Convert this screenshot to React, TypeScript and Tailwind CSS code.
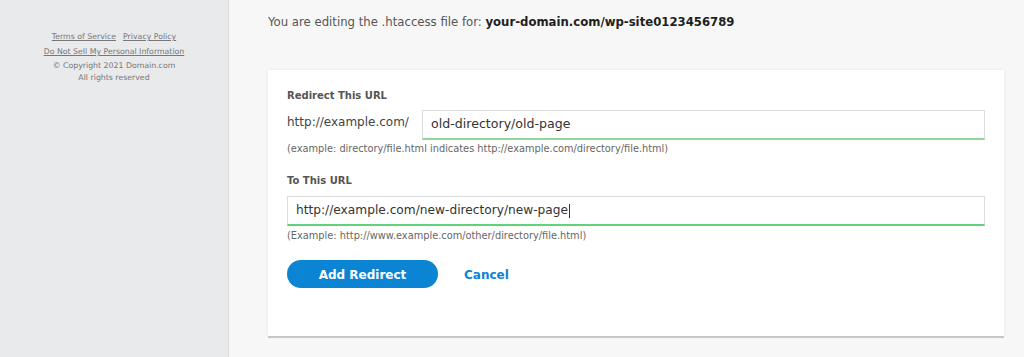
import React from "react";

export default function App() {
  const font = { fontFamily: '"DejaVu Sans", "Open Sans", sans-serif' };
  return (
    <div className="flex h-[357px] w-[1024px] overflow-hidden bg-[#f7f7f7] font-['DejaVu_Sans',sans-serif]" style={font}>
      <aside className="w-[229px] shrink-0 bg-[#e9eaec] border-r border-[#dcdddf] pt-[29px] text-center text-[7.8px] leading-[15px] text-[#777]">
        <div className="flex justify-center gap-[7px]">
          <a className="underline">Terms of Service</a>
          <a className="underline">Privacy Policy</a>
        </div>
        <div>
          <a className="underline">Do Not Sell My Personal Information</a>
        </div>
        <div className="leading-[13px]">© Copyright 2021 Domain.com</div>
        <div className="leading-[12px]">All rights reserved</div>
      </aside>
      <main className="flex-1 pl-[39px] pr-[20px]">
        <p className="pt-[13px] text-[11.7px] leading-[18px] text-[#555]">
          You are editing the .htaccess file for: <span className="font-bold text-[#1f1f1f]">your-domain.com/wp-site0123456789</span>
        </p>
        <div className="mt-[39px] h-[266px] bg-white px-[19px] pt-[18px] shadow-[0_0_3px_rgba(0,0,0,0.08),0_2px_0_rgba(0,0,0,0.18)]">
          <div className="text-[10px] leading-[16px] font-bold text-[#555]">Redirect This URL</div>
          <div className="mt-[6px] flex items-start">
            <div className="w-[135px] shrink-0 pt-[3px] text-[12px] leading-[18px] text-[#444]">http://example.com/</div>
            <div className="flex h-[30px] flex-1 items-center border border-[#dcdcdc] border-b-2 border-b-[#90d49a] px-[8px] text-[12.6px] text-[#333]">old-directory/old-page</div>
          </div>
          <div className="mt-[2px] text-[9.8px] leading-[14px] text-[#666]">(example: directory/file.html indicates http://example.com/directory/file.html)</div>
          <div className="mt-[17px] text-[10px] leading-[16px] font-bold text-[#555]">To This URL</div>
          <div className="mt-[7px] flex h-[30px] items-center border border-[#dcdcdc] border-b-2 border-b-[#5fd27a] px-[8px] text-[12.2px] text-[#333]">
            http://example.com/new-directory/new-page<span className="ml-[1px] inline-block h-[14px] w-px bg-[#333]" />
          </div>
          <div className="mt-[3px] text-[9.8px] leading-[14px] text-[#666]">(Example: http://www.example.com/other/directory/file.html)</div>
          <div className="mt-[17px] flex items-center gap-[26px]">
            <button className="h-[28px] w-[151px] rounded-full bg-[#0b84d4] pt-px text-[12px] font-bold text-white">Add Redirect</button>
            <button className="pt-px text-[12px] font-bold text-[#0b84d4]">Cancel</button>
          </div>
        </div>
      </main>
    </div>
  );
}
